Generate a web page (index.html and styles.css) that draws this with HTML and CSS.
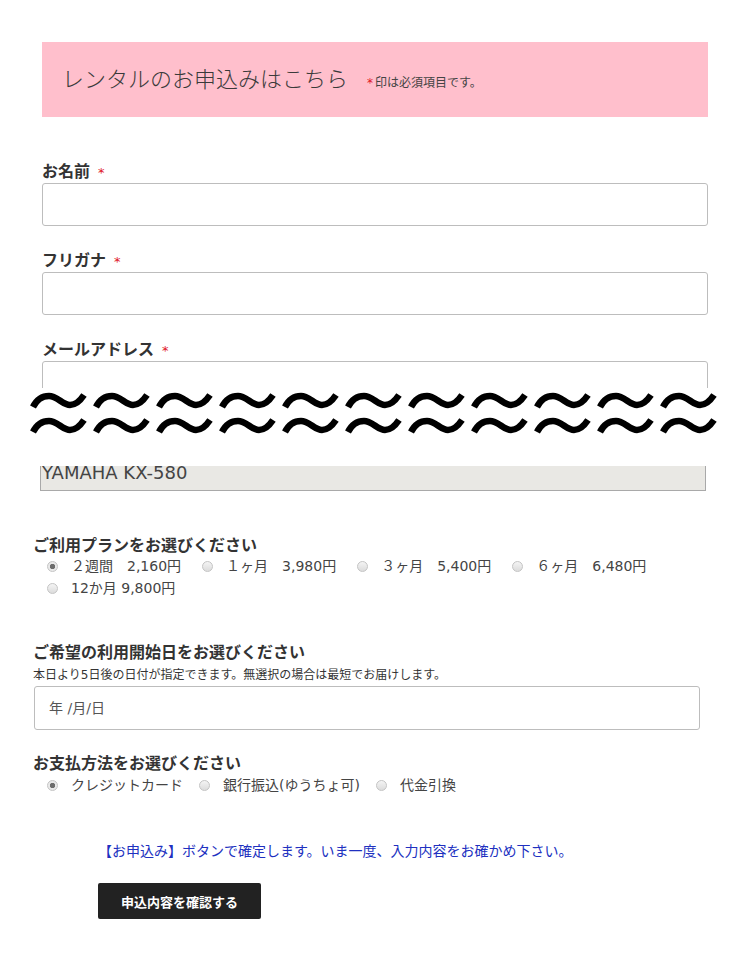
FILE: index.html
```html
<!DOCTYPE html>
<html>
<head>
  <meta charset="utf-8" />
  <title>レンタルのお申込み</title>
  <link rel="stylesheet" href="styles.css">
</head>
<body>
  <main class="page">
    <section class="upper">
      <div class="banner">
        <h1 class="banner-title">レンタルのお申込みはこちら</h1>
        <span class="banner-note"><span class="req">*</span>印は必須項目です。</span>
      </div>

      <label class="field">
        <span class="field-label">お名前<span class="req">*</span></span>
        <input class="text" type="text" />
      </label>
      <label class="field">
        <span class="field-label">フリガナ<span class="req">*</span></span>
        <input class="text" type="text" />
      </label>
      <label class="field">
        <span class="field-label">メールアドレス<span class="req">*</span></span>
        <span class="clip-top"><input class="text" type="email" /></span>
      </label>
    </section>

    <div class="tear">
      <svg width="754" height="78" viewBox="0 0 754 78">
        <defs>
          <pattern id="tilde" x="30" y="3" width="63" height="25" patternUnits="userSpaceOnUse">
            <path d="M3 16 C7 8 13 5 19 5 C27 5 33 14 40 14 C46 14 50 10 54 4" fill="none" stroke="#000" stroke-width="6.5" />
          </pattern>
        </defs>
        <rect x="30" y="3" width="693" height="50" fill="url(#tilde)" />
      </svg>
    </div>

    <section class="lower">
      <div class="product">YAMAHA KX-580</div>

      <h2 class="group-title">ご利用プランをお選びください</h2>
      <div class="opts">
        <label class="opt"><input type="radio" name="plan" checked />２週間　2,160円</label>
        <label class="opt"><input type="radio" name="plan" />１ヶ月　3,980円</label>
        <label class="opt"><input type="radio" name="plan" />３ヶ月　5,400円</label>
        <label class="opt"><input type="radio" name="plan" />６ヶ月　6,480円</label>
        <label class="opt"><input type="radio" name="plan" />12か月 9,800円</label>
      </div>

      <h2 class="group-title date-title">ご希望の利用開始日をお選びください</h2>
      <p class="hint">本日より5日後の日付が指定できます。無選択の場合は最短でお届けします。</p>
      <input class="text date" type="text" placeholder="年 /月/日" />

      <h2 class="group-title pay-title">お支払方法をお選びください</h2>
      <div class="opts pay">
        <label class="opt"><input type="radio" name="pay" checked />クレジットカード</label>
        <label class="opt"><input type="radio" name="pay" />銀行振込(ゆうちょ可)</label>
        <label class="opt"><input type="radio" name="pay" />代金引換</label>
      </div>

      <div class="confirm">
        <p class="confirm-note">【お申込み】ボタンで確定します。いま一度、入力内容をお確かめ下さい。</p>
        <button class="btn" type="submit">申込内容を確認する</button>
      </div>
    </section>
  </main>
</body>
</html>
```

FILE: styles.css
```css
body {
  margin: 0;
  background: #fff;
  color: #333;
  font-family: "DejaVu Sans", "Noto Sans CJK JP", sans-serif;
}
.page {
  width: 754px;
  padding-top: 42px;
}
.upper {
  padding: 0 46px 0 42px;
}
.banner {
  height: 75px;
  box-sizing: border-box;
  padding: 20px 0 0 20px;
  background: #ffbfcc;
  display: flex;
  align-items: baseline;
  margin-bottom: 43px;
}
.banner-title {
  margin: 0;
  font-family: "Noto Sans CJK JP", sans-serif;
  font-size: 22px;
  font-weight: 300;
  line-height: 30px;
  color: #3a3a3a;
}
.banner-note {
  margin-left: 19px;
  font-family: "Noto Sans CJK JP", sans-serif;
  font-size: 12px;
  color: #444;
}
.banner-note .req {
  margin: 0 2px 0 0;
  font-size: 12px;
}
.req {
  color: #e0141e;
  font-family: "DejaVu Sans", sans-serif;
  font-size: 13px;
  font-weight: normal;
  line-height: 0;
  margin-left: 8px;
}
.field {
  display: block;
  margin-bottom: 23px;
}
.field:last-child {
  margin-bottom: 0;
}
.field-label {
  display: block;
  height: 20px;
  margin-bottom: 3px;
  font-family: "Noto Sans CJK JP", sans-serif;
  font-size: 16px;
  font-weight: bold;
  line-height: 20px;
  color: #333;
}
.text {
  display: block;
  width: 100%;
  height: 43px;
  box-sizing: border-box;
  border: 1px solid #bdbdbd;
  border-radius: 3px;
  background: #fff;
  padding: 0 14px;
  font: inherit;
  font-size: 14px;
}
.clip-top {
  display: block;
  height: 27px;
  overflow: hidden;
}
.tear {
  height: 78px;
  background: #fff;
}
.tear svg {
  display: block;
}
.lower {
  padding-left: 33px;
  width: 673px;
}
.product {
  margin-left: 7px;
  width: 666px;
  height: 25px;
  box-sizing: border-box;
  border: 1px solid #a9a9a9;
  border-top: none;
  background: #e9e8e4;
  padding-left: 1px;
  font-size: 18px;
  line-height: 14px;
  color: #444;
}
.group-title {
  margin: 42px 0 0;
  font-family: "Noto Sans CJK JP", sans-serif;
  font-size: 16px;
  font-weight: bold;
  line-height: 22px;
  color: #333;
}
.opts {
  display: flex;
  flex-wrap: wrap;
  column-gap: 21px;
  width: 653px;
  padding-left: 14px;
  font-size: 14px;
  line-height: 22px;
  color: #444;
}
.opt {
  display: inline-flex;
  align-items: center;
}
.opt input {
  appearance: none;
  -webkit-appearance: none;
  width: 11px;
  height: 11px;
  margin: 0 13px 0 0;
  border: 1px solid #c4c4c4;
  border-radius: 50%;
  background: linear-gradient(#f4f4f4, #dcdcdc);
}
.opt input:checked {
  background: radial-gradient(circle, #6d6d6d 0 2.4px, #e9e9e9 3px);
}
.pay {
  column-gap: 16px;
  margin-top: 1px;
}
.date-title {
  margin-top: 41px;
}
.hint {
  margin: 4px 0 2px;
  font-size: 12px;
  line-height: 18px;
  color: #333;
}
.date {
  margin-left: 1px;
  width: 666px;
  height: 44px;
}
.date::placeholder {
  color: #555;
}
.pay-title {
  margin-top: 21px;
}
.confirm {
  padding-left: 65px;
  margin-top: 45px;
}
.confirm-note {
  margin: 0;
  font-size: 14px;
  line-height: 20px;
  color: #2030c0;
}
.btn {
  margin-top: 22px;
  height: 36px;
  padding: 0 23px;
  border: none;
  border-radius: 2px;
  background: #222;
  color: #fff;
  font-family: "Noto Sans CJK JP", sans-serif;
  font-size: 13px;
  font-weight: bold;
  cursor: pointer;
}
```
